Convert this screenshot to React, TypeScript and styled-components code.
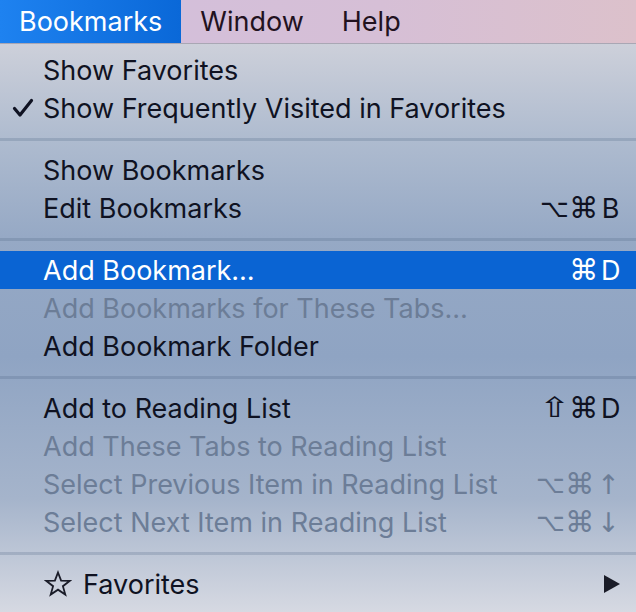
import styled, { createGlobalStyle } from "styled-components";

const GlobalStyle = createGlobalStyle`
  html, body {
    margin: 0;
    padding: 0;
    width: 636px;
    height: 612px;
    overflow: hidden;
  }
  body {
    font-family: Inter, "Noto Sans", "DejaVu Sans", sans-serif;
    -webkit-font-smoothing: antialiased;
  }
`;

const Screen = styled.div`
  width: 636px;
  height: 612px;
  display: flex;
  flex-direction: column;
  overflow: hidden;
`;

const MenuBar = styled.div`
  height: 43px;
  flex-shrink: 0;
  display: flex;
  align-items: stretch;
  background: linear-gradient(90deg, #d2bfdd 0%, #d6bfd6 60%, #dcc1cb 100%);
  border-bottom: 1px solid #a9a7b4;
`;

type BarItemProps = {
  $active?: boolean;
};

const BarItem = styled.div<BarItemProps>`
  display: flex;
  align-items: center;
  padding: 0 19px 1px 19px;
  font-size: 27px;
  color: ${({ $active }) => ($active ? "#ffffff" : "#22121f")};
  background: ${({ $active }) =>
    $active ? "linear-gradient(90deg, #1e82f0 0%, #0a68d8 100%)" : "transparent"};
`;

const Menu = styled.div`
  flex: 1;
  display: flex;
  flex-direction: column;
  padding-top: 7px;
  background: linear-gradient(
    180deg,
    #cdd0da 0%,
    #aebbcf 17%,
    #96a9c5 34%,
    #8fa4c3 55%,
    #a5b4cb 80%,
    #d6d9e2 100%
  );
`;

type RowProps = {
  $highlight?: boolean;
  $disabled?: boolean;
};

const Row = styled.div<RowProps>`
  height: 38px;
  flex-shrink: 0;
  display: flex;
  align-items: center;
  padding: 0 16px 0 0;
  font-size: 27px;
  color: ${({ $highlight, $disabled }) =>
    $highlight ? "#ffffff" : $disabled ? "#6c7d97" : "#0f1222"};
  background: ${({ $highlight }) => ($highlight ? "#0a64d3" : "transparent")};
`;

const Gutter = styled.div`
  width: 43px;
  flex-shrink: 0;
  display: flex;
  align-items: center;
  justify-content: center;
  padding-left: 2px;
  box-sizing: border-box;
`;

const Label = styled.span`
  flex: 1;
  white-space: nowrap;
`;

const Shortcut = styled.div`
  display: flex;
  align-items: center;
  gap: 6px;
`;

const Key = styled.span`
  width: 19px;
  text-align: center;
  font-size: 27px;
  font-family: Inter, "DejaVu Sans", sans-serif;
`;

type GlyphProps = {
  $size: number;
  $stretch: number;
};

const Glyph = styled.span<GlyphProps>`
  width: 23px;
  display: inline-flex;
  justify-content: center;
  font-size: ${({ $size }) => $size}px;
  line-height: 1;
  font-family: "DejaVu Sans", sans-serif;
  transform: scaleX(${({ $stretch }) => $stretch});
`;

const glyphSizes: Record<string, [number, number]> = {
  "⌥": [25, 1],
  "⌘": [29, 1],
  "⇧": [28, 1.35],
  "↑": [27, 1],
  "↓": [27, 1],
};

const Separator = styled.div`
  height: 24px;
  flex-shrink: 0;
  display: flex;
  align-items: center;
  &::after {
    content: "";
    display: block;
    width: 100%;
    height: 3px;
    background: rgba(70, 92, 125, 0.22);
  }
`;

const SubmenuLabel = styled(Label)`
  margin-left: 11px;
`;

const Check = () => (
  <svg width="22" height="20" viewBox="0 0 22 20">
    <path
      d="M2.5 10.5 L8 17 L19.5 2.5"
      fill="none"
      stroke="#0f1222"
      strokeWidth="3.2"
      strokeLinecap="round"
      strokeLinejoin="round"
    />
  </svg>
);

const StarIcon = styled.svg`
  margin-left: 44px;
  flex-shrink: 0;
`;

const Star = () => (
  <StarIcon width="28" height="28" viewBox="0 0 28 28">
    <path
      d="M14 2.5 L17.1 10.6 L25.6 10.9 L18.9 16.2 L21.3 24.6 L14 19.7 L6.7 24.6 L9.1 16.2 L2.4 10.9 L10.9 10.6 Z"
      fill="none"
      stroke="#1a1c28"
      strokeWidth="1.8"
      strokeLinejoin="miter"
    />
  </StarIcon>
);

const Arrow = () => (
  <svg width="18" height="18" viewBox="0 0 18 18">
    <path d="M2 0 L18 9 L2 18 Z" fill="#1a1c28" />
  </svg>
);

type Item = {
  label: string;
  keys?: string[];
  disabled?: boolean;
  highlight?: boolean;
  checked?: boolean;
};

const renderKeys = (keys: string[]) => (
  <Shortcut>
    {keys.map((k, i) => {
      if (/[A-Z]/.test(k)) return <Key key={i}>{k}</Key>;
      const [size, stretch] = glyphSizes[k] ?? [26, 1];
      return (
        <Glyph key={i} $size={size} $stretch={stretch}>
          {k}
        </Glyph>
      );
    })}
  </Shortcut>
);

const MenuRow = ({ label, keys, disabled, highlight, checked }: Item) => (
  <Row $highlight={highlight} $disabled={disabled}>
    <Gutter>{checked && <Check />}</Gutter>
    <Label>{label}</Label>
    {keys && renderKeys(keys)}
  </Row>
);

const groups: Item[][] = [
  [
    { label: "Show Favorites" },
    { label: "Show Frequently Visited in Favorites", checked: true },
  ],
  [
    { label: "Show Bookmarks" },
    { label: "Edit Bookmarks", keys: ["⌥", "⌘", "B"] },
  ],
  [
    { label: "Add Bookmark…", keys: ["⌘", "D"], highlight: true },
    { label: "Add Bookmarks for These Tabs…", disabled: true },
    { label: "Add Bookmark Folder" },
  ],
  [
    { label: "Add to Reading List", keys: ["⇧", "⌘", "D"] },
    { label: "Add These Tabs to Reading List", disabled: true },
    {
      label: "Select Previous Item in Reading List",
      keys: ["⌥", "⌘", "↑"],
      disabled: true,
    },
    {
      label: "Select Next Item in Reading List",
      keys: ["⌥", "⌘", "↓"],
      disabled: true,
    },
  ],
];

export default function App() {
  return (
    <>
      <GlobalStyle />
      <Screen>
        <MenuBar>
          <BarItem $active>Bookmarks</BarItem>
          <BarItem>Window</BarItem>
          <BarItem>Help</BarItem>
        </MenuBar>
        <Menu>
          {groups.map((group, gi) => (
            <div key={gi}>
              {gi > 0 && <Separator />}
              {group.map((item) => (
                <MenuRow key={item.label} {...item} />
              ))}
            </div>
          ))}
          <Separator />
          <Row>
            <Star />
            <SubmenuLabel>Favorites</SubmenuLabel>
            <Arrow />
          </Row>
        </Menu>
      </Screen>
    </>
  );
}
